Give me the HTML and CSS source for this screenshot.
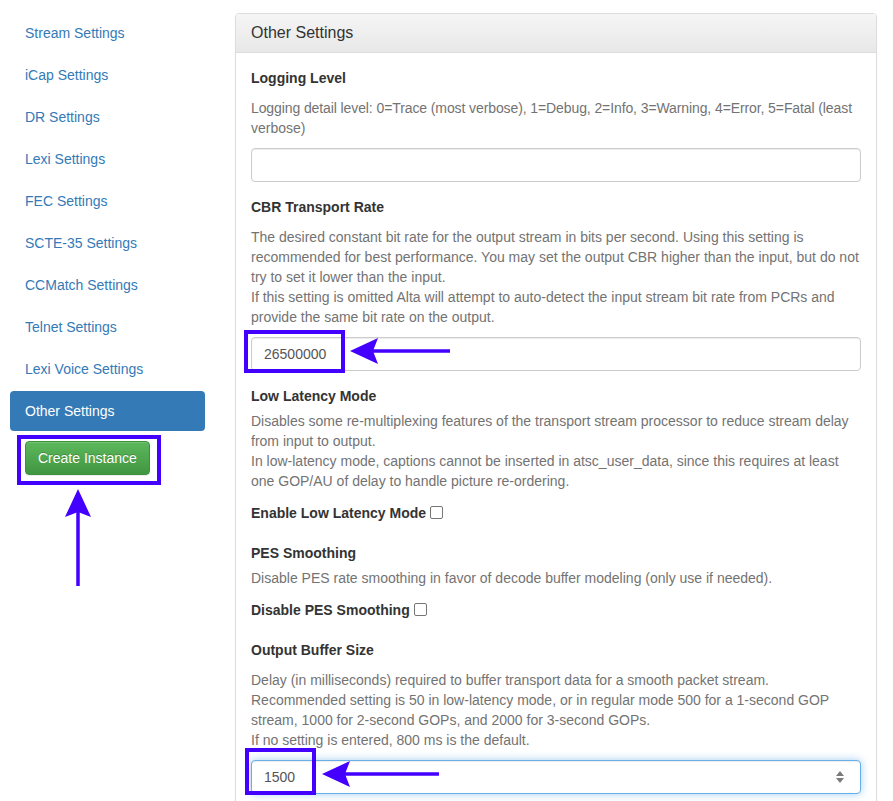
FILE: index.html
```html
<!DOCTYPE html>
<html>
<head>
<meta charset="utf-8">
<link rel="stylesheet" href="styles.css">
</head>
<body>
<div class="page">
  <div class="sidebar">
    <ul class="nav">
      <li><a>Stream Settings</a></li>
      <li><a>iCap Settings</a></li>
      <li><a>DR Settings</a></li>
      <li><a>Lexi Settings</a></li>
      <li><a>FEC Settings</a></li>
      <li><a>SCTE-35 Settings</a></li>
      <li><a>CCMatch Settings</a></li>
      <li><a>Telnet Settings</a></li>
      <li><a>Lexi Voice Settings</a></li>
      <li class="active"><a>Other Settings</a></li>
    </ul>
    <div class="create-wrap">
      <button class="btn-success">Create Instance</button>
    </div>
  </div>
  <div class="panel">
    <div class="panel-heading">Other Settings</div>
    <div class="panel-body">
      <div class="group-a">
        <div class="label">Logging Level</div>
        <div class="help help-a"><span class="tight">Logging detail level: 0=Trace (most verbose), 1=Debug, 2=Info, 3=Warning, 4=Error, 5=Fatal (least</span><br>verbose)</div>
        <input class="control" type="text" value="">
      </div>
      <div class="group-a">
        <div class="label">CBR Transport Rate</div>
        <div class="help help-a">The desired constant bit rate for the output stream in bits per second. Using this setting is recommended for best performance. You may set the output CBR higher than the input, but do not try to set it lower than the input.<br>If this setting is omitted Alta will attempt to auto-detect the input stream bit rate from PCRs and provide the same bit rate on the output.</div>
        <input class="control" type="text" value="26500000">
      </div>
      <div class="group-b">
        <div class="label">Low Latency Mode</div>
        <div class="help">Disables some re-multiplexing features of the transport stream processor to reduce stream delay from input to output.<br>In low-latency mode, captions cannot be inserted in atsc_user_data, since this requires at least one GOP/AU of delay to handle picture re-ordering.</div>
        <div class="check-row"><span class="label">Enable Low Latency Mode</span> <span class="checkbox"></span></div>
      </div>
      <div class="group-b">
        <div class="label">PES Smoothing</div>
        <div class="help">Disable PES rate smoothing in favor of decode buffer modeling (only use if needed).</div>
        <div class="check-row"><span class="label">Disable PES Smoothing</span> <span class="checkbox"></span></div>
      </div>
      <div class="group-a">
        <div class="label">Output Buffer Size</div>
        <div class="help help-a">Delay (in milliseconds) required to buffer transport data for a smooth packet stream.<br>Recommended setting is 50 in low-latency mode, or in regular mode 500 for a 1-second GOP stream, 1000 for 2-second GOPs, and 2000 for 3-second GOPs.<br>If no setting is entered, 800 ms is the default.</div>
        <div class="number-wrap">
          <input class="control focused" type="text" value="1500">
          <svg class="spin" width="10" height="16" viewBox="0 0 10 16"><path d="M5 2 L9 7 L1 7 Z M1 9 L9 9 L5 14 Z" fill="#7a7a7a"/></svg>
        </div>
      </div>
    </div>
  </div>
</div>
<svg class="annotations" width="893" height="801" viewBox="0 0 893 801">
  <g fill="none" stroke="#4400ff" stroke-width="4">
    <rect x="246" y="332" width="97" height="39"/>
    <rect x="247" y="750" width="67" height="43"/>
    <rect x="19" y="437" width="140" height="46"/>
  </g>
  <g stroke="#4400ff" stroke-width="3.5">
    <line x1="370" y1="351" x2="450" y2="351"/>
    <line x1="342" y1="774" x2="439" y2="774"/>
    <line x1="78" y1="508" x2="78" y2="586"/>
  </g>
  <g fill="#4400ff">
    <polygon points="350,351 378,338 373,351 378,364"/>
    <polygon points="322,774 350,761 345,774 350,787"/>
    <polygon points="78,489 91,517 78,512 65,517"/>
  </g>
</svg>
</body>
</html>
```

FILE: styles.css
```css
* { box-sizing: border-box; }
html, body { margin: 0; padding: 0; background: #fff; }
body {
  font-family: "Liberation Sans", Arial, sans-serif;
  font-size: 14px;
  line-height: 20px;
  color: #333;
  position: relative;
  overflow: hidden;
  height: 801px;
}
.page {
  display: flex;
  align-items: flex-start;
  padding: 13px 16px 0 10px;
  gap: 30px;
}
.sidebar { width: 195px; flex: none; }
.nav { list-style: none; margin: 0; padding: 0; }
.nav li { margin-top: 2px; }
.nav li:first-child { margin-top: 0; }
.nav a {
  display: block;
  padding: 10px 15px;
  color: #337ab7;
  border-radius: 4px;
}
.nav li.active a { background: #337ab7; color: #fff; }
.create-wrap { padding: 10px 15px 0; }
.btn-success {
  font-family: "Liberation Sans", Arial, sans-serif;
  font-size: 14px;
  line-height: 20px;
  height: 34px;
  padding: 6px 12px;
  color: #fff;
  border: 1px solid #3e8f3e;
  border-radius: 4px;
  background: linear-gradient(to bottom, #5cb85c 0, #419641 100%);
  text-shadow: 0 -1px 0 rgba(0,0,0,.2);
  box-shadow: inset 0 1px 0 rgba(255,255,255,.15), 0 1px 1px rgba(0,0,0,.075);
}
.panel {
  flex: 1;
  border: 1px solid #ddd;
  border-radius: 4px;
  box-shadow: 0 1px 2px rgba(0,0,0,.05);
  background: #fff;
}
.panel-heading {
  padding: 10px 15px;
  font-size: 16px;
  line-height: 17px;
  height: 39px;
  color: #333;
  background: linear-gradient(to bottom, #f5f5f5 0, #e8e8e8 100%);
  border-bottom: 1px solid #ddd;
  border-radius: 3px 3px 0 0;
}
.panel-body { padding: 15px 15px 40px; }
.group-a, .group-b { display: flex; flex-direction: column; }
.label { font-weight: bold; margin-bottom: 5px; }
.help { color: #737373; }
.tight { white-space: nowrap; letter-spacing: -0.1px; }
.group-a { margin-bottom: 15px; }
.help-a { margin: 5px 0 10px; }
.group-b { margin-bottom: 20px; }
.check-row { margin-top: 12px; display: flex; align-items: center; height: 20px; }
.check-row .label { margin: 0 4px 0 0; }
.checkbox {
  display: inline-block;
  width: 13px;
  height: 13px;
  border: 1px solid #767676;
  border-radius: 2px;
  background: #fff;
  margin-top: -2px;
}
.control {
  display: block;
  width: 100%;
  height: 34px;
  padding: 6px 12px;
  font-family: "Liberation Sans", Arial, sans-serif;
  font-size: 14px;
  line-height: 20px;
  color: #555;
  background: #fff;
  border: 1px solid #ccc;
  border-radius: 4px;
  box-shadow: inset 0 1px 1px rgba(0,0,0,.075);
  outline: none;
}
.control.focused {
  border-color: #66afe9;
  box-shadow: inset 0 1px 1px rgba(0,0,0,.075), 0 0 8px rgba(102,175,233,.6);
}
.number-wrap { position: relative; }
.spin { position: absolute; right: 16px; top: 9px; }
.annotations { position: absolute; left: 0; top: 0; pointer-events: none; }
```
